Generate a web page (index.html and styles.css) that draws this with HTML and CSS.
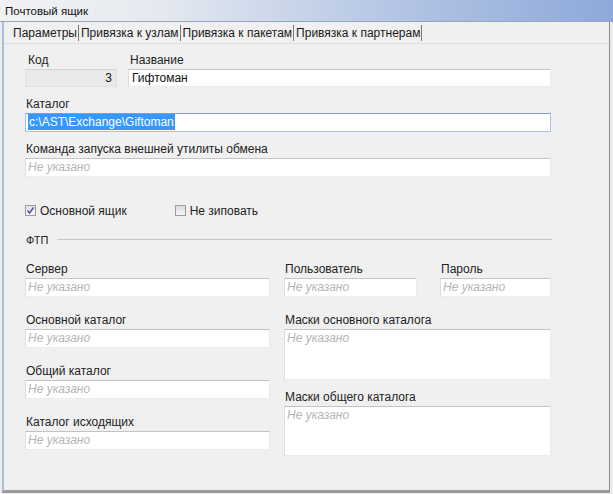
FILE: index.html
```html
<!DOCTYPE html>
<html lang="ru">
<head>
<meta charset="utf-8">
<title>Почтовый ящик</title>
<link rel="stylesheet" href="styles.css">
</head>
<body>
<div class="window">
  <div class="titlebar">Почтовый ящик</div>
  <div class="frame">
    <div class="tabs">
      <span class="tab active">Параметры</span>
      <span class="tab">Привязка к узлам</span>
      <span class="tab">Привязка к пакетам</span>
      <span class="tab">Привязка к партнерам</span>
    </div>
    <div class="form">
      <div class="row row-top">
        <div class="field f-code">
          <div class="label">Код</div>
          <div class="input readonly num">3</div>
        </div>
        <div class="field f-name">
          <div class="label">Название</div>
          <div class="input">Гифтоман</div>
        </div>
      </div>
      <div class="field full gap10">
        <div class="label">Каталог</div>
        <div class="input focused"><span class="sel">c:\AST\Exchange\Giftoman</span></div>
      </div>
      <div class="field full gap10">
        <div class="label">Команда запуска внешней утилиты обмена</div>
        <div class="input ph">Не указано</div>
      </div>
      <div class="checks">
        <label class="check"><span class="box checked"><svg width="9" height="9" viewBox="0 0 9 9"><path d="M1.5 4.5 L3.5 7 L7.5 1.5" fill="none" stroke="#4a4fa8" stroke-width="1.4"/></svg></span>Основной ящик</label>
        <label class="check second"><span class="box"></span>Не зиповать</label>
      </div>
      <div class="group"><span class="group-title">ФТП</span><span class="group-line"></span></div>
      <div class="ftp">
        <div class="col left">
          <div class="field">
            <div class="label">Сервер</div>
            <div class="input ph">Не указано</div>
          </div>
          <div class="field mt16">
            <div class="label">Основной каталог</div>
            <div class="input ph">Не указано</div>
          </div>
          <div class="field mt16">
            <div class="label">Общий каталог</div>
            <div class="input ph">Не указано</div>
          </div>
          <div class="field mt16">
            <div class="label">Каталог исходящих</div>
            <div class="input ph">Не указано</div>
          </div>
        </div>
        <div class="col right">
          <div class="pair">
            <div class="field f-user">
              <div class="label">Пользователь</div>
              <div class="input ph">Не указано</div>
            </div>
            <div class="field f-pass">
              <div class="label">Пароль</div>
              <div class="input ph">Не указано</div>
            </div>
          </div>
          <div class="field mt16">
            <div class="label">Маски основного каталога</div>
            <div class="input area1 ph">Не указано</div>
          </div>
          <div class="field mt10">
            <div class="label">Маски общего каталога</div>
            <div class="input area2 ph">Не указано</div>
          </div>
        </div>
      </div>
    </div>
  </div>
</div>
</body>
</html>
```

FILE: styles.css
```css
html, body {
  margin: 0;
  padding: 0;
}
body {
  background: #ececec;
  font-family: "Liberation Sans", Arial, sans-serif;
  font-size: 12px;
  color: #222;
  width: 613px;
  height: 494px;
  overflow: hidden;
}
.window {
  width: 613px;
  height: 494px;
  display: flex;
  flex-direction: column;
}
.titlebar {
  height: 21px;
  line-height: 22px;
  padding-left: 5px;
  font-size: 11.5px;
  color: #111;
  background: linear-gradient(to right, #f1f2f4 0%, #e6eaf0 25%, #b9c9e6 60%, #8ea8d9 100%);
  border-bottom: 1px solid #9aa6b8;
  flex: none;
}
.frame {
  flex: 1;
  margin-left: 2px;
  width: 605px;
  border-left: 2px solid #a9bce0;
  border-right: 1px solid #8e8e8e;
  border-bottom: 3px solid #9a9a9a;
  background: #f0f0f0;
  margin-bottom: 1px;
}
.tabs {
  display: flex;
  align-items: center;
  height: 21px;
  padding-left: 7px;
  border-bottom: 1px solid #dcdcdc;
}
.tab {
  padding: 0 1px 0 2px;
  border-right: 1px solid #7a7a7a;
  line-height: 16px;
  color: #1a1a1a;
}
.form {
  padding: 9px 0 0 21px;
}
.row {
  display: flex;
}
.field {
  display: flex;
  flex-direction: column;
}
.label {
  line-height: 15px;
  height: 15px;
  margin-bottom: 1px;
  padding-left: 1px;
}
.input {
  box-sizing: border-box;
  height: 19px;
  line-height: 17px;
  background: #fff;
  border: 1px solid #ececec;
  border-top-color: #c4c4c4;
  border-left-color: #dedede;
  padding-left: 2px;
  color: #111;
  white-space: nowrap;
  overflow: hidden;
}
.f-code {
  width: 92px;
}
.f-code .label {
  padding-left: 3px;
}
.f-name {
  margin-left: 11px;
  width: 423px;
}
.f-name .label {
  padding-left: 2px;
}
.f-name .input {
  padding-left: 3px;
}
.readonly {
  background: #e9e9e9;
  border-color: #e2e2e2;
  border-top-color: #d4d4d4;
}
.num {
  text-align: right;
  padding-right: 4px;
}
.row-top .input {
  height: 18px;
  line-height: 16px;
}
.full {
  width: 526px;
}
.gap10 {
  margin-top: 10px;
}
.focused {
  border-color: #a9c4e4;
  border-top-color: #7e9fce;
}
.sel {
  background: #3399ff;
  color: #fff;
  padding: 1px 1px;
}
.ph {
  color: #b5b5b5;
  font-style: italic;
}
.checks {
  display: flex;
  align-items: center;
  margin-top: 26px;
  height: 15px;
}
.check {
  display: flex;
  align-items: center;
}
.check.second {
  margin-left: 48px;
}
.box {
  box-sizing: border-box;
  width: 11px;
  height: 11px;
  border: 1px solid #9c9c9c;
  background: linear-gradient(#dcdcdc, #f6f6f6);
  margin-right: 4px;
  display: flex;
  align-items: center;
  justify-content: center;
}
.box.checked {
  background: linear-gradient(#e0e0e8, #f7f7fa);
}
.group {
  display: flex;
  align-items: center;
  margin-top: 14px;
  height: 15px;
  width: 527px;
}
.group-title {
  padding-left: 1px;
  font-size: 11px;
}
.group-line {
  flex: 1;
  margin-left: 9px;
  border-top: 1px solid #c6c6c6;
}
.ftp {
  display: flex;
  margin-top: 15px;
}
.col.left {
  width: 245px;
}
.col.right {
  margin-left: 14px;
  width: 267px;
}
.pair {
  display: flex;
}
.f-user {
  width: 133px;
}
.f-pass {
  width: 111px;
  margin-left: 23px;
}
.mt16 {
  margin-top: 16px;
}
.mt10 {
  margin-top: 10px;
}
.area1 {
  height: 51px;
}
.area2 {
  height: 50px;
}
```
